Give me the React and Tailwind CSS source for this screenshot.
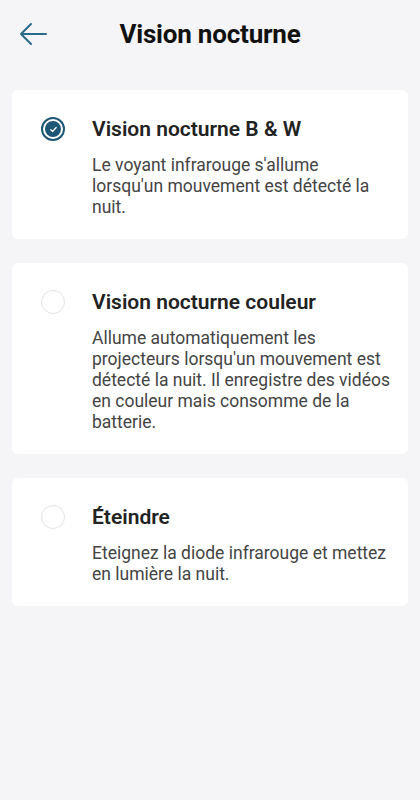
import React, { useState } from "react";

const options = [
  {
    id: "bw",
    title: "Vision nocturne B & W",
    desc: "Le voyant infrarouge s'allume lorsqu'un mouvement est détecté la nuit.",
  },
  {
    id: "color",
    title: "Vision nocturne couleur",
    desc: "Allume automatiquement les projecteurs lorsqu'un mouvement est détecté la nuit. Il enregistre des vidéos en couleur mais consomme de la batterie.",
  },
  {
    id: "off",
    title: "Éteindre",
    desc: "Eteignez la diode infrarouge et mettez en lumière la nuit.",
  },
];

function Radio({ checked }) {
  if (!checked) {
    return <div className="w-6 h-6 rounded-full border border-[#e3e3e6] bg-white" />;
  }
  return (
    <div className="w-6 h-6 rounded-full border-2 border-[#1d5775] flex items-center justify-center">
      <div className="w-[16px] h-[16px] rounded-full bg-[#1d5775] flex items-center justify-center">
        <svg width="9" height="9" viewBox="0 0 10 10" fill="none">
          <path d="M2 5.2l2 2 4-4.4" stroke="white" strokeWidth="1.4" strokeLinecap="round" strokeLinejoin="round" />
        </svg>
      </div>
    </div>
  );
}

export default function App() {
  const [selected, setSelected] = useState("bw");

  return (
    <div className="min-h-[800px] bg-[#f5f5f8] font-['Roboto',sans-serif] px-3">
      {/* Header */}
      <div className="relative flex items-center justify-center h-[68px]">
        <button className="absolute left-[6px] top-[20px] text-[#2a6a8a]">
          <svg width="30" height="28" viewBox="0 0 30 28" fill="none">
            <path d="M28 14H3M13 4L3 14l10 10" stroke="currentColor" strokeWidth="2" strokeLinecap="round" strokeLinejoin="round" />
          </svg>
        </button>
        <h1 className="text-[26px] font-bold text-[#111] tracking-[-0.2px]">Vision nocturne</h1>
      </div>

      <div className="flex flex-col gap-6 mt-[22px]">
        {options.map((o) => (
          <div
            key={o.id}
            onClick={() => setSelected(o.id)}
            className="bg-white rounded-md flex pt-[26px] pb-[21px] pr-4 cursor-pointer"
          >
            <div className="w-[80px] flex justify-center pt-[1px] pl-[2px]">
              <Radio checked={selected === o.id} />
            </div>
            <div className="flex-1">
              <div className="text-[21px] leading-[26px] font-semibold text-[#222]">{o.title}</div>
              <p className="mt-[13px] text-[17.5px] leading-[21px] text-[#444]">{o.desc}</p>
            </div>
          </div>
        ))}
      </div>
    </div>
  );
}
